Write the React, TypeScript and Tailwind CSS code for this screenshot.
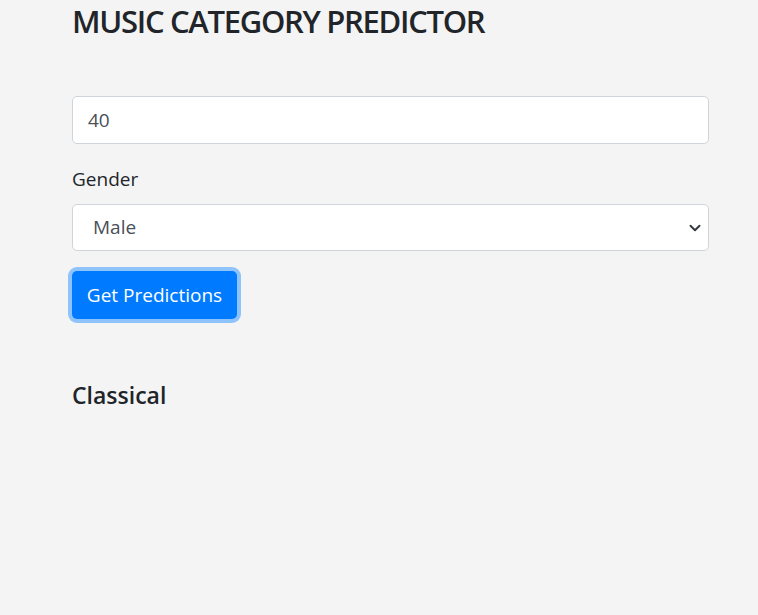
import { useState } from 'react';

export default function App() {
  const [age, setAge] = useState('40');
  const [gender, setGender] = useState('Male');

  return (
    <div className="min-h-screen bg-[#f4f4f4] text-[#212529] font-['Open_Sans',sans-serif]">
      <div className="pl-[72px] pr-[49px]">
        <h3 className="text-[31px] leading-[42px] font-semibold tracking-[-1.3px] mb-[54px]">MUSIC CATEGORY PREDICTOR</h3>
        <form onSubmit={e => e.preventDefault()}>
          <div className="mb-[20px]">
            <input
              type="text"
              value={age}
              onChange={e => setAge(e.target.value)}
              className="block w-full h-[48px] px-[15px] text-[19px] text-[#495057] bg-white border border-[#ced4da] rounded-[5px] outline-none"
            />
          </div>
          <div className="mb-[20px]">
            <label className="block text-[19px] leading-[30px] mb-[10px]">Gender</label>
            <div className="relative">
              <select
                value={gender}
                onChange={e => setGender(e.target.value)}
                className="block w-full h-[47px] pl-[20px] pr-[40px] text-[19px] text-[#495057] bg-white border border-[#ced4da] rounded-[5px] outline-none appearance-none"
              >
                <option>Male</option>
                <option>Female</option>
              </select>
              <svg className="absolute right-[8px] top-1/2 -translate-y-1/2 pointer-events-none" width="12" height="12" viewBox="0 0 16 16">
                <path d="M2 5l6 6 6-6" fill="none" stroke="#343a40" strokeWidth="2.6" strokeLinecap="round" strokeLinejoin="round" />
              </svg>
            </div>
          </div>
          <button
            type="submit"
            className="block w-[165px] h-[48px] text-[19px] leading-[30px] text-white bg-[#007bff] rounded-[5px] shadow-[0_0_0_4px_#8ec3fb]"
          >
            Get Predictions
          </button>
        </form>
        <h5 className="mt-[61px] text-[23px] leading-[30px] font-semibold">Classical</h5>
      </div>
    </div>
  );
}
